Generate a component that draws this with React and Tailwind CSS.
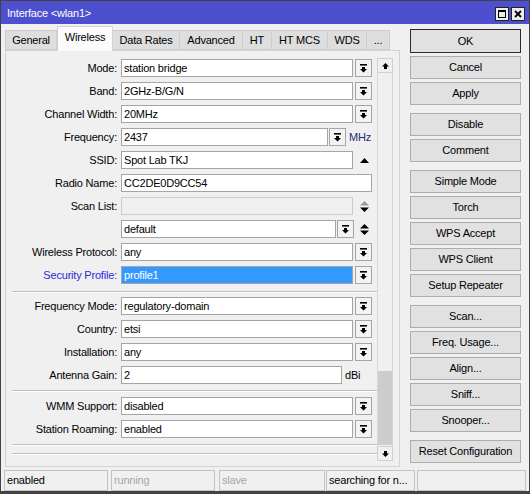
import React from "react";

const DropIcon = () => (
  <svg width="7" height="9" viewBox="0 0 7 9">
    <rect x="0" y="0" width="7" height="1.6" fill="#000" />
    <path d="M2 3h3v2h2L3.5 8.6 0 5h2z" fill="#000" />
  </svg>
);

const DropBtn = ({ className = "" }) => (
  <div className={`w-[17px] h-[18px] border border-[#a5a5a5] bg-[#f3f3f3] flex items-center justify-center shrink-0 ${className}`}>
    <DropIcon />
  </div>
);

const Input = ({ className = "", children }) => (
  <div className={`h-[18px] border pl-[2px] leading-[16px] whitespace-nowrap overflow-hidden shrink-0 ${className}`}>
    {children}
  </div>
);

const UpTri = ({ color = "#000" }) => (
  <svg width="9" height="5" viewBox="0 0 9 5">
    <path d="M4.5 0L9 5H0z" fill={color} />
  </svg>
);

const UpDown = ({ upColor = "#000" }) => (
  <svg width="9" height="11" viewBox="0 0 9 11">
    <path d="M4.5 0L9 4.5H0z" fill={upColor} />
    <path d="M0 6.5h9L4.5 11z" fill="#000" />
  </svg>
);

const Row = ({ label, labelClass = "", children }) => (
  <div className="flex items-center h-[18px]">
    <div className={`w-[111px] text-right whitespace-nowrap ${labelClass}`}>{label}</div>
    <div className="ml-[4px] w-[251px] h-full flex items-center">{children}</div>
  </div>
);

const Sep = ({ className = "" }) => (
  <div className={`ml-[6px] h-[2px] border-t border-[#c0c0c0] border-b border-b-white ${className}`} />
);

const Combo = ({ value, label, labelClass = "", selected = false }) => (
  <Row label={label} labelClass={labelClass}>
    <Input
      className={
        selected
          ? "w-[232px] border-[#a5a5a5] bg-[#3399ff] text-white"
          : "w-[232px] border-[#a5a5a5] bg-white"
      }
    >
      {value}
    </Input>
    <DropBtn className="ml-[2px]" />
  </Row>
);

const Btn = ({ children, ok = false }) => (
  <div
    className={
      ok
        ? "h-[24px] border border-[#2b2b2b] bg-[#e1e1e1] flex items-center justify-center"
        : "h-[23px] border border-[#adadad] bg-[#e1e1e1] flex items-center justify-center"
    }
  >
    {children}
  </div>
);

const tabs = [
  { name: "General", w: "w-[52px]" },
  { name: "Wireless", w: "w-[56px]", sel: true },
  { name: "Data Rates", w: "w-[67px]" },
  { name: "Advanced", w: "w-[63px]" },
  { name: "HT", w: "w-[29px]" },
  { name: "HT MCS", w: "w-[56px]" },
  { name: "WDS", w: "w-[39px]" },
  { name: "...", w: "w-[23px]" },
];

export default function App() {
  return (
    <div className="w-[530px] h-[494px] flex flex-col bg-[#f0f0f0] border border-[#434343] border-b-[3px] font-['Liberation_Sans',Arial,sans-serif] text-[11px] tracking-[-0.2px] text-black overflow-hidden select-none">
      {/* Title bar */}
      <div className="h-[23px] shrink-0 bg-[#4d50ce] flex items-start pl-[6px] pr-[4px] text-white">
        <span className="flex-1 pt-[6px] leading-[13px]">Interface &lt;wlan1&gt;</span>
        <div className="flex gap-[2px] pt-[6px]">
          <div className="w-[14px] h-[14px] border border-[#222] bg-[#ececec] flex items-center justify-center">
            <svg width="8" height="8" viewBox="0 0 8 8">
              <rect x="0.5" y="0.5" width="7" height="7" fill="none" stroke="#000" strokeWidth="1" />
              <rect x="0" y="0" width="8" height="2" fill="#000" />
            </svg>
          </div>
          <div className="w-[14px] h-[14px] border border-[#222] bg-[#ececec] flex items-center justify-center">
            <svg width="8" height="8" viewBox="0 0 8 8">
              <path d="M1 1L7 7M7 1L1 7" stroke="#000" strokeWidth="1.8" />
            </svg>
          </div>
        </div>
      </div>

      {/* Body */}
      <div className="flex h-[443px] shrink-0">
        <div className="ml-[4px] w-[395px] flex flex-col">
          {/* Tabs */}
          <div className="h-[26px] flex items-end relative z-10">
            {tabs.map((t, i) =>
              t.sel ? (
                <div
                  key={t.name}
                  className={`${t.w} h-[25px] -mb-px bg-[#fbfbfb] border border-b-0 border-[#d4d4d4] flex items-center justify-center pb-[3px]`}
                >
                  {t.name}
                </div>
              ) : (
                <div
                  key={t.name}
                  className={`${t.w} h-[20px] bg-[#dedede] border-y border-r border-[#cdcdcd] ${i === 0 ? "border-l" : ""} flex items-center justify-center pt-[1px]`}
                >
                  {t.name}
                </div>
              )
            )}
          </div>

          {/* Panel */}
          <div className="h-[417px] border border-[#d4d4d4] bg-[#f0f0f0] flex pt-[7px] pb-[5px] pr-[6px]">
            <div className="w-[371px] pt-[1px] flex flex-col">
              <div className="flex flex-col gap-[5px]">
                <Combo label="Mode:" value="station bridge" />
                <Combo label="Band:" value="2GHz-B/G/N" />
                <Combo label="Channel Width:" value="20MHz" />
                <Row label="Frequency:">
                  <Input className="w-[207px] border-[#a5a5a5] bg-white">2437</Input>
                  <DropBtn className="ml-[1px]" />
                  <span className="ml-[3px] text-[#1f2a78]">MHz</span>
                </Row>
                <Row label="SSID:">
                  <Input className="w-[232px] border-[#a5a5a5] bg-white">Spot Lab TKJ</Input>
                  <div className="flex-1 flex justify-end pr-[3px]">
                    <UpTri />
                  </div>
                </Row>
                <Row label="Radio Name:">
                  <Input className="w-[251px] border-[#a5a5a5] bg-white">CC2DE0D9CC54</Input>
                </Row>
                <Row label="Scan List:">
                  <Input className="w-[232px] border-[#cccccc] bg-[#f0f0f0]"></Input>
                  <div className="flex-1 flex justify-end pr-[3px]">
                    <UpDown upColor="#9a9a9a" />
                  </div>
                </Row>
                <Row label="">
                  <Input className="w-[215px] border-[#a5a5a5] bg-white">default</Input>
                  <DropBtn className="ml-[1px]" />
                  <div className="flex-1 flex justify-end pr-[3px]">
                    <UpDown />
                  </div>
                </Row>
                <Combo label="Wireless Protocol:" value="any" />
                <Combo
                  label="Security Profile:"
                  labelClass="text-[#2a2ad8]"
                  value="profile1"
                  selected
                />
              </div>
              <Sep className="mt-[7px]" />
              <div className="mt-[4px] flex flex-col gap-[5px]">
                <Combo label="Frequency Mode:" value="regulatory-domain" />
                <Combo label="Country:" value="etsi" />
                <Combo label="Installation:" value="any" />
                <Row label="Antenna Gain:">
                  <Input className="w-[221px] border-[#a5a5a5] bg-white">2</Input>
                  <span className="ml-[3px]">dBi</span>
                </Row>
              </div>
              <Sep className="mt-[6px]" />
              <div className="mt-[5px] flex flex-col gap-[5px]">
                <Combo label="WMM Support:" value="disabled" />
                <Combo label="Station Roaming:" value="enabled" />
              </div>
              <Sep className="mt-[6px]" />
              <Sep className="mt-[7px]" />
            </div>

            {/* Scrollbar */}
            <div className="w-[16px] h-[403px] flex flex-col border-x border-[#d6d6d6] bg-[#f0f0f0]">
              <div className="h-[15px] border border-[#d0d0d0] -mx-px bg-[#f0f0f0] flex items-center justify-center">
                <svg width="7" height="6" viewBox="0 0 7 6">
                  <path d="M3.5 0L7 3.5H5V6H2V3.5H0z" fill="#000" />
                </svg>
              </div>
              <div className="flex-1 flex flex-col">
                <div className="flex-1" />
                <div className="h-[74px] mb-[1px] bg-[#cdcdcd]" />
              </div>
              <div className="h-[15px] border border-[#d0d0d0] -mx-px bg-[#f0f0f0] flex items-center justify-center">
                <svg width="7" height="6" viewBox="0 0 7 6">
                  <path d="M2 0H5V2.5H7L3.5 6 0 2.5H2z" fill="#000" />
                </svg>
              </div>
            </div>
          </div>
        </div>

        {/* Right buttons */}
        <div className="ml-[10px] w-[111px] pt-[5px] flex flex-col">
          <div className="flex flex-col gap-[3px]">
            <Btn ok>OK</Btn>
            <Btn>Cancel</Btn>
            <Btn>Apply</Btn>
          </div>
          <div className="mt-[8px] flex flex-col gap-[3px]">
            <Btn>Disable</Btn>
            <Btn>Comment</Btn>
          </div>
          <div className="mt-[8px] flex flex-col gap-[3px]">
            <Btn>Simple Mode</Btn>
            <Btn>Torch</Btn>
            <Btn>WPS Accept</Btn>
            <Btn>WPS Client</Btn>
            <Btn>Setup Repeater</Btn>
          </div>
          <div className="mt-[8px] flex flex-col gap-[3px]">
            <Btn>Scan...</Btn>
            <Btn>Freq. Usage...</Btn>
            <Btn>Align...</Btn>
            <Btn>Sniff...</Btn>
            <Btn>Snooper...</Btn>
          </div>
          <div className="mt-[8px] flex flex-col gap-[3px]">
            <Btn>Reset Configuration</Btn>
          </div>
        </div>
      </div>

      {/* Status bar */}
      <div className="mt-[3px] h-[21px] shrink-0 flex pl-[3px]">
        <div className="w-[104px] h-full border border-[#c3c3c3] pl-[2px] flex items-center whitespace-nowrap overflow-hidden">enabled</div>
        <div className="ml-[3px] w-[104px] h-full border border-[#c3c3c3] pl-[2px] flex items-center text-[#a6a6a6] whitespace-nowrap overflow-hidden">running</div>
        <div className="ml-[4px] w-[106px] h-full border border-[#c3c3c3] pl-[2px] flex items-center text-[#a6a6a6] whitespace-nowrap overflow-hidden">slave</div>
        <div className="ml-[1px] w-[89px] h-full border border-[#c3c3c3] pl-[2px] flex items-center whitespace-nowrap overflow-hidden">searching for n...</div>
        <div className="ml-[2px] w-[109px] h-full border border-[#c3c3c3]" />
      </div>
    </div>
  );
}
